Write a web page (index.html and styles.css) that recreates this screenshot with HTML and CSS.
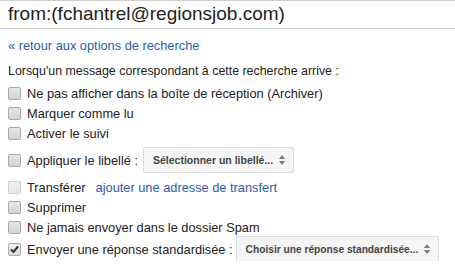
FILE: index.html
```html
<!DOCTYPE html>
<html lang="fr">
<head>
<meta charset="UTF-8">
<title>Filtre</title>
<link rel="stylesheet" href="styles.css">
</head>
<body>

<div class="query">from:(fchantrel@regionsjob.com)</div>

<div class="filter-box">
    <a class="back-link" href="#">« retour aux options de recherche</a>

    <p class="intro">Lorsqu'un message correspondant à cette recherche arrive :</p>

    <div class="row"><span class="box"></span><span>Ne pas afficher dans la boîte de réception (Archiver)</span></div>
    <div class="row"><span class="box"></span><span>Marquer comme lu</span></div>
    <div class="row"><span class="box"></span><span>Activer le suivi</span></div>
    <div class="row tall">
        <span class="box"></span><span>Appliquer le libellé :</span>
        <span class="select">Sélectionner un libellé... <span class="arrows"></span></span>
    </div>
    <div class="row"><span class="box disabled"></span><span>Transférer</span><a class="fwd-link" href="#">ajouter une adresse de transfert</a></div>
    <div class="row"><span class="box"></span><span>Supprimer</span></div>
    <div class="row"><span class="box"></span><span>Ne jamais envoyer dans le dossier Spam</span></div>
    <div class="row last">
        <span class="box checked">
            <svg width="11" height="11" viewBox="0 0 11 11"><path d="M2 5.5 L4.5 8 L9 2.5" fill="none" stroke="#333" stroke-width="2"/></svg>
        </span>
        <span>Envoyer une réponse standardisée :</span>
        <span class="select wide">Choisir une réponse standardisée... <span class="arrows"></span></span>
    </div>
</div>

</body>
</html>
```

FILE: styles.css
```css
body {
    margin: 0;
    font-family: Arial, "Liberation Sans", sans-serif;
    font-size: 12.8px;
    color: #222;
    background-color: #fff;
}

.query {
    border-top: 1px solid #d0d0d0;
    border-bottom: 1px solid #c8c8c8;
    padding: 3px 8px 0 8px;
    height: 24px;
    font-size: 19px;
    line-height: 20px;
}

.filter-box {
    padding: 8px 8px 0 8px;
}

.back-link {
    display: block;
    color: #2a5db0;
    text-decoration: none;
    line-height: 18px;
}

.intro {
    margin: 7px 0 3px 0;
    font-size: 12.4px;
    line-height: 18px;
}

.row {
    display: flex;
    align-items: center;
    height: 20px;
    white-space: nowrap;
}

.row.tall {
    height: 34px;
}

.row.last {
    height: 24px;
}

.box {
    width: 11px;
    height: 11px;
    border: 1px solid #a8a8a8;
    border-radius: 2px;
    background: linear-gradient(#e6e6e6, #d4d4d4);
    margin-right: 6px;
    flex-shrink: 0;
    display: flex;
    align-items: center;
    justify-content: center;
}

.box.disabled {
    border-color: #cfcfcf;
    background: linear-gradient(#f0f0f0, #e6e6e6);
}

.box.checked {
    background: linear-gradient(#f0f0f0, #dcdcdc);
}

.fwd-link {
    color: #2a5db0;
    text-decoration: none;
    margin-left: 10px;
}

.select {
    display: inline-flex;
    align-items: center;
    margin-left: 5px;
    height: 24px;
    padding: 0 7px 0 9px;
    border: 1px solid #dcdcdc;
    border-radius: 2px;
    background-color: #f5f5f5;
    color: #444;
    font-size: 10.5px;
    font-weight: bold;
}

.select.wide {
    margin-left: 3px;
    font-size: 10.2px;
}

.arrows {
    position: relative;
    width: 7px;
    height: 10px;
    margin-left: 6px;
}

.arrows::before,
.arrows::after {
    content: "";
    position: absolute;
    left: 0;
    border-left: 3.5px solid transparent;
    border-right: 3.5px solid transparent;
}

.arrows::before {
    top: 0;
    border-bottom: 4px solid #777;
}

.arrows::after {
    bottom: 0;
    border-top: 4px solid #777;
}
```
